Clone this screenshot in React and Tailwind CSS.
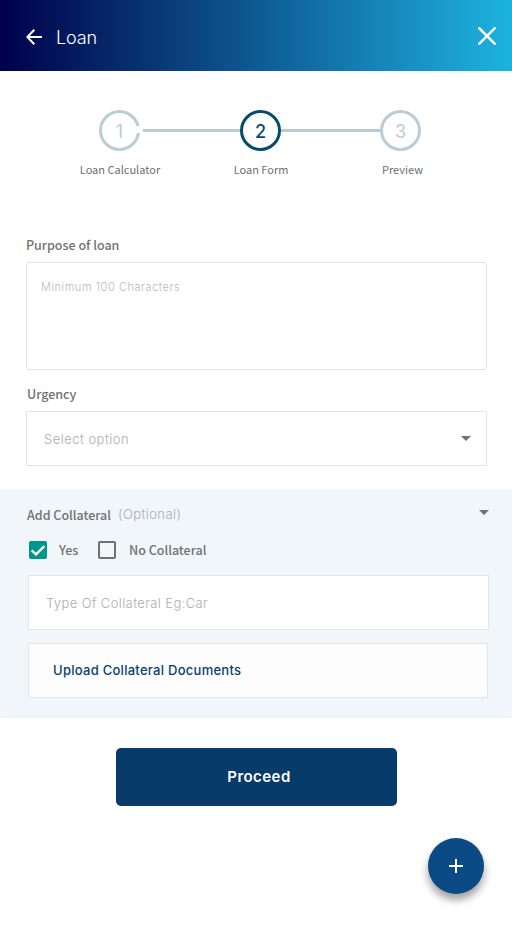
import React from "react";

const LABEL = "font-['Noto_Sans_CJK_JP','Noto_Sans',sans-serif]";

function Caret() {
  return (
    <svg width="10" height="5" viewBox="0 0 10 5" className="block shrink-0">
      <path d="M0 0h10L5 5z" fill="#717171" />
    </svg>
  );
}

function Header() {
  return (
    <header className="flex h-[71px] items-center bg-[linear-gradient(90deg,#00004b_0%,#083370_28%,#0e5a94_50%,#1687b9_75%,#1db3df_100%)] pl-[26px] pr-4 text-white">
      <button type="button" aria-label="Back" className="mt-[3px]">
        <svg width="16" height="16" viewBox="0 0 16 16" fill="none" stroke="currentColor" strokeWidth="2">
          <path d="M16 8H2M8.3 0.8L1.3 8l7 7.2" />
        </svg>
      </button>
      <h1 className="ml-[14px] mt-[5px] text-[18px] font-light leading-6 tracking-[-0.1px]">Loan</h1>
      <button type="button" aria-label="Close" className="ml-auto">
        <svg width="18" height="18" viewBox="0 0 18 18" fill="none" stroke="currentColor" strokeWidth="2.5" strokeLinecap="square">
          <path d="M1.4 1.4l15.2 15.2M16.6 1.4L1.4 16.6" />
        </svg>
      </button>
    </header>
  );
}

function Stepper() {
  return (
    <nav className="pt-[39px]">
      <div className="flex items-center pl-[99px] text-[18px] leading-none">
        <div className="relative flex size-[41px] items-center justify-center rounded-full border-3 border-[#b9cdd6] pt-[3px] text-[#b9cdd6]">
          1
          <span className="absolute -right-[3px] top-[13px] h-[7px] w-[5px] bg-white" />
        </div>
        <div className="ml-[3px] h-[3px] w-[97px] bg-[#b9cdd6]" />
        <div className="flex size-[41px] items-center justify-center rounded-full border-3 border-[#074c6b] pt-[3px] font-medium text-[#074c6b]">2</div>
        <div className="h-[3px] w-[99px] bg-[#b9cdd6]" />
        <div className="flex size-[41px] items-center justify-center rounded-full border-3 border-[#b9cdd6] pt-[3px] text-[#b9cdd6]">3</div>
      </div>
      <div className={`mt-[10px] flex pl-[49px] text-center text-[11px] leading-4 text-[#6f6f6f] ${LABEL}`}>
        <span className="w-[142px]">Loan Calculator</span>
        <span className="w-[140px]">Loan Form</span>
        <span className="w-[143px]">Preview</span>
      </div>
    </nav>
  );
}

export default function App() {
  return (
    <div className="flex h-[931px] w-[512px] flex-col overflow-hidden bg-white font-['Inter','Liberation_Sans',sans-serif]">
      <Header />
      <Stepper />

      <section className="mt-[58px] pl-[26px] pr-[25px]">
        <div className={`h-[27px] text-[12.5px] font-medium leading-5 text-[#717171] ${LABEL}`}>Purpose of loan</div>
        <div className="h-[108px] rounded-[3px] border border-[#e2e2e2] pl-[14px] pt-4 text-[11px] font-light leading-4 tracking-[0.55px] text-[#b9b9b9]">
          Minimum 100 Characters
        </div>
        <div className={`mt-[14px] h-[27px] pl-px text-[12.5px] font-medium leading-5 text-[#717171] ${LABEL}`}>Urgency</div>
        <div className="flex h-[55px] items-center justify-between rounded-[1px] border border-[#e2e2e2] pl-[17px] pr-[15px] text-[13px] font-light tracking-[0.47px] text-[#adadad]">
          <span className="pt-0.5">Select option</span>
          <Caret />
        </div>
      </section>

      <section className="mt-[23px] h-[229px] rounded-[2px] bg-[#f1f6fb] pl-[27px] pr-[23px] pt-4">
        <div className="flex h-5 items-center">
          <span className={`text-[12.5px] font-medium leading-5 text-[#717171] ${LABEL}`}>Add Collateral</span>
          <span className="ml-[7px] text-[13px] font-light tracking-[0.42px] text-[#adadad]">(Optional)</span>
          <span className="mb-[5px] ml-auto"><Caret /></span>
        </div>
        <div className={`mt-[15px] flex h-5 items-center pl-[2px] text-[12.5px] font-medium leading-5 text-[#717171] ${LABEL}`}>
          <svg width="18" height="18" viewBox="0 0 18 18">
            <rect width="18" height="18" rx="2" fill="#009688" />
            <path d="M2.7 9.4l4.3 4 8.3-8.3" fill="none" stroke="white" strokeWidth="2.2" />
          </svg>
          <span className="ml-3 w-[19px]">Yes</span>
          <span className="ml-5 size-[18px] rounded-[2px] border-2 border-[#717171]" />
          <span className="ml-[13px]">No Collateral</span>
        </div>
        <div className="ml-px mt-[15px] flex h-[55px] w-[461px] items-center border border-[#e1e5e8] bg-white pl-[17px] pt-0.5 text-[13px] font-light tracking-[0.39px] text-[#adadad]">
          Type Of Collateral Eg:Car
        </div>
        <div className="ml-px mt-[13px] flex h-[55px] w-[460px] items-center border border-[#e1e5e8] bg-[#fdfdfd] pl-6 pt-px text-[13px] font-medium tracking-[0.27px] text-[#083f70]">
          Upload Collateral Documents
        </div>
      </section>

      <button type="button" className="ml-[116px] mt-[30px] h-[58px] w-[281px] shrink-0 rounded-[5px] bg-[#073b69] pl-[5px] pt-px text-[15px] font-semibold tracking-[0.45px] text-white">
        Proceed
      </button>

      <button type="button" aria-label="Add" className="ml-[428px] mt-8 flex size-14 shrink-0 items-center justify-center rounded-full bg-[#0c4a86] text-white shadow-[0_6px_9px_rgba(0,0,0,0.38)]">
        <svg width="14" height="14" viewBox="0 0 14 14" fill="none" stroke="currentColor" strokeWidth="2">
          <path d="M7 0v14M0 7h14" />
        </svg>
      </button>
    </div>
  );
}
